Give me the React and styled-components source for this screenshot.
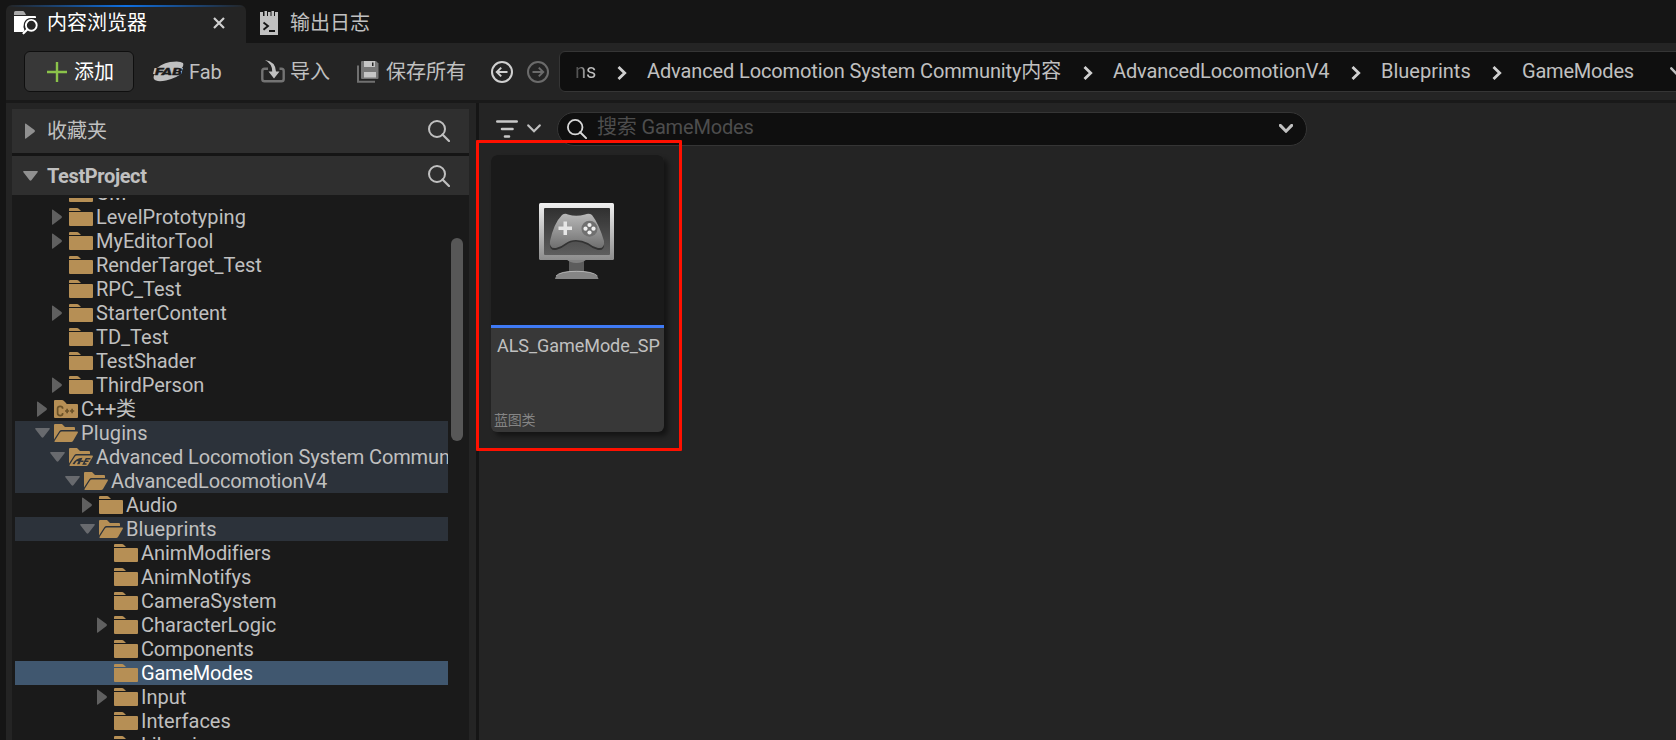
import React from "react";
import styled, { createGlobalStyle, css } from "styled-components";

const GlobalStyle = createGlobalStyle`
  * { box-sizing: border-box; }
  body { margin: 0; background: #151515; overflow: hidden; }
  svg { display: block; flex: none; }
`;

const Window = styled.div`
  width: 1676px;
  height: 740px;
  padding-left: 6px;
  display: flex;
  flex-direction: column;
  overflow: hidden;
  background: #151515;
  color: #c0c0c0;
  font: 20px/24px Roboto, "Noto Sans CJK SC", sans-serif;
  white-space: nowrap;
`;

const TabBar = styled.div`
  display: flex;
  flex: none;
  height: 43px;
  padding-top: 5px;
`;

const Tab = styled.div`
  display: flex;
  align-items: center;
  width: ${(p) => p.$width}px;
  padding: 0 21px 3px ${(p) => p.$inset}px;
  border-radius: 6px 6px 0 0;
  overflow: hidden;
  ${(p) =>
    p.$active &&
    css`
      color: #fff;
      background: linear-gradient(90deg, #242424, #0f6fe0 50%, #242424) top / 100% 2px no-repeat, #242424;
    `}
`;

const TabLabel = styled.span`
  margin-left: ${(p) => p.$gap}px;
  flex: 1;
`;

const Toolbar = styled.div`
  display: flex;
  align-items: center;
  flex: none;
  height: 60px;
  padding-left: 18px;
  background: #242424;
  border-bottom: 3px solid #191919;
`;

const AddButton = styled.div`
  display: flex;
  align-items: center;
  flex: none;
  gap: 7px;
  width: 110px;
  height: 41px;
  padding-left: 22px;
  color: #fff;
  background: #383838;
  border: 1px solid #0f0f0f;
  border-radius: 6px;
`;

const ToolItem = styled.div`
  display: flex;
  align-items: center;
  flex: none;
  gap: ${(p) => p.$gap}px;
  width: ${(p) => p.$width}px;
  margin-left: ${(p) => p.$before}px;
`;

const Breadcrumb = styled.div`
  display: flex;
  align-items: center;
  flex: none;
  width: 1130px;
  height: 41px;
  margin-left: 10px;
  padding: 0 0 1px 15px;
  background: #0f0f0f;
  border: 1px solid #353535;
  border-radius: 6px;
`;

const Crumb = styled.span`
  flex: none;
  width: ${(p) => p.$width}px;
  letter-spacing: ${(p) => p.$track || 0}px;
  ${(p) =>
    p.$faded &&
    css`
      color: transparent;
      background: linear-gradient(90deg, #3a3a3a, #c0c0c0 60%);
      background-clip: text;
      -webkit-background-clip: text;
    `}
`;

const CrumbArrow = styled.div`
  padding: 3px 20px 0 21px;
`;

const Body = styled.div`
  display: flex;
  flex: 1;
  min-height: 0;
  background: #242424;
`;

const Sources = styled.div`
  display: flex;
  flex-direction: column;
  flex: none;
  width: 470px;
  padding: 6px 7px 0 6px;
`;

const SectionHeader = styled.div`
  display: flex;
  align-items: center;
  flex: none;
  height: ${(p) => p.$height}px;
  padding: 0 19px 0 ${(p) => p.$inset}px;
  background: #2f2f2f;
  ${(p) => p.$bold && "font-weight: 700; letter-spacing: -0.38px;"}
`;

const SectionRule = styled.div`
  flex: none;
  height: 3px;
  background: #151515;
`;

const SectionTitle = styled.span`
  flex: 1;
  margin-left: ${(p) => p.$gap}px;
`;

const TreeArea = styled.div`
  display: flex;
  flex: 1;
  min-height: 0;
  padding: 3px 6px 0 3px;
  background: #1a1a1a;
`;

const TreeView = styled.div`
  width: 433px;
  overflow: hidden;
`;

const TreeRows = styled.div`
  margin-top: -17px;
`;

const TreeRow = styled.div`
  display: flex;
  align-items: center;
  height: 24px;
  padding-left: ${(p) => 19 + p.$depth * 15}px;
  color: ${(p) => (p.$selected ? "#fff" : "#c0c0c0")};
  background: ${(p) => (p.$selected ? "#40576f" : p.$open ? "#2c323a" : "transparent")};
`;

const ArrowSlot = styled.div`
  width: 20px;
  flex: none;
  padding-left: ${(p) => (p.$closed ? 3 : 0.5)}px;
`;

const FolderLabel = styled.span`
  margin-left: 3px;
  letter-spacing: ${(p) => p.$track || 0}px;
`;

const ScrollThumb = styled.div`
  width: 12px;
  height: 203px;
  margin: 40px 0 0 3px;
  border-radius: 6px;
  background: #575757;
`;

const Assets = styled.div`
  flex: 1;
  border-left: 3px solid #151515;
`;

const FilterRow = styled.div`
  display: flex;
  align-items: center;
  height: 43px;
  margin-top: 4px;
  padding-left: 17px;
`;

const SearchBox = styled.div`
  display: flex;
  align-items: center;
  width: 750px;
  height: 34px;
  margin: 0 0 0 16px;
  padding: 0 13px 0 9px;
  background: #0f0f0f;
  border: 1px solid #353535;
  border-radius: 17px;
`;

const Placeholder = styled.span`
  flex: 1;
  margin: -4px 0 0 10px;
  color: #4d4d4d;
  letter-spacing: -0.17px;
`;

const AssetCard = styled.div`
  display: flex;
  flex-direction: column;
  width: 173px;
  height: 277px;
  margin: 5px 0 0 12px;
  border-radius: 6px;
  overflow: hidden;
  background: #383838;
  box-shadow: 4px 4px 5px rgba(0, 0, 0, 0.45);
`;

const Thumbnail = styled.div`
  display: flex;
  justify-content: center;
  height: 173px;
  padding: 48px 3px 0 0;
  background: #1a1a1a;
  border-bottom: 3px solid #3f7af5;
`;

const AssetName = styled.div`
  flex: 1;
  padding: 6px 0 0 6px;
  font-size: 18px;
  letter-spacing: -0.05px;
`;

const AssetType = styled.div`
  height: 24px;
  padding-left: 3px;
  color: #858585;
  font-size: 14px;
  letter-spacing: -0.2px;
`;

const Highlight = styled.div`
  position: absolute;
  left: 476px;
  top: 140px;
  width: 206px;
  height: 311px;
  border: 3px solid #ff1000;
  border-radius: 1px;
`;

const FOLDER = "#b68f55";

function SearchIcon({ size = 22, color = "#c0c0c0" }) {
  return (
    <svg width={size} height={size} viewBox="0 0 22 22" fill="none" stroke={color} strokeWidth="2">
      <circle cx="9" cy="9" r="8" />
      <path d="M14.5 14.5 21 21" strokeWidth="2.2" strokeLinecap="round" />
    </svg>
  );
}

function RightArrow({ color = "#606060" }) {
  return (
    <svg width="10" height="16" viewBox="0 0 10 16">
      <path d="M0 1Q0 0 1 .8L9.5 7Q10.3 8 9.5 9L1 15.4Q0 16 0 15Z" fill={color} />
    </svg>
  );
}

function DownArrow({ color = "#686a6e" }) {
  return (
    <svg width="15" height="10" viewBox="0 0 15 10">
      <path d="M.8 0H14.2Q15.3 .3 14.6 1.2L8.4 9.3Q7.5 10 6.6 9.3L.4 1.2Q-.3.3 .8 0Z" fill={color} />
    </svg>
  );
}

function ChevronDown({ stroke = 2.5 }) {
  return (
    <svg width="14" height="9" viewBox="0 0 14 9" fill="none" stroke="#c0c0c0" strokeWidth={stroke} strokeLinecap="round">
      <path d="M1.3 1.4 7 7.2 12.7 1.4" />
    </svg>
  );
}

function FolderIcon({ kind }) {
  if (kind === "open" || kind === "plugin") {
    return (
      <svg width="24" height="18" viewBox="0 0 24 18" fill={FOLDER}>
        <path d="M0 1Q0 0 1 0H8L11 3H20Q21 3 21 4V6H7.5Q6.2 6 5.5 7L0 15.5Z" />
        <path d="M7.8 7.6H23.3Q24.2 7.8 23.8 8.7L19 17Q18.4 18 17.2 18H1Q0 17.8 .7 16.8L5.8 8.8Q6.6 7.6 7.8 7.6Z" />
        {kind === "plugin" && (
          <>
            <path d="M3.5 16Q6.5 10.3 13.5 9.800L10.500 16.300H8L9.500 13.300H7.500L5.500 16.300Z" fill="#2c323a" />
            <path d="M11.500 13.300H14.500M21.500 10.700H17.300L14.500 16H17.500M16 13.300H19.500" fill="none" stroke="#2c323a" strokeWidth="1.600" />
          </>
        )}
      </svg>
    );
  }
  return (
    <svg width="24" height="18" viewBox="0 0 24 18" fill={FOLDER}>
      <path d="M0 1Q0 0 1 0H8Q9 0 10 1L12 3H0Z" />
      <path d="M0 4H23Q24 4 24 5V17Q24 18 23 18H1Q0 18 0 17Z" />
      {kind === "cpp" && (
        <>
          <path d="M0 3H12L13 4.5H0Z" />
          <path
            d="M8.6 8.7V8.2Q8.6 6.3 6.2 6.3 3.6 6.3 3.6 8.6V13.3Q3.6 15.6 6.2 15.6 8.6 15.6 8.6 13.7V13.1M11 11H15.2M13.1 8.8V13.2M16 11H20.2M18.1 8.8V13.2"
            fill="none"
            stroke="#6b5228"
            strokeWidth="1.7"
          />
        </>
      )}
    </svg>
  );
}

function BrowserIcon() {
  return (
    <svg width="25" height="24" viewBox="0 0 25 24">
      <path d="M0 1.5Q0 0 1.5 0H9Q10 0 11 2L12 4H0Z" fill="#a8a8a8" />
      <path d="M0 5H21Q22 5 22 6V21H0Z" fill="#fff" />
      <path d="M7 24 10.5 19.5Q8.7 16 10 12Q12 7 17 7H25V24Z" fill="#242424" />
      <circle cx="17.3" cy="14.3" r="5.4" fill="none" stroke="#fff" strokeWidth="1.9" />
      <path d="M13.3 18.4 9.5 22.3" stroke="#fff" strokeWidth="2.2" strokeLinecap="round" />
    </svg>
  );
}

function LogIcon() {
  return (
    <svg width="18" height="24" viewBox="0 0 18 24">
      <path d="M0 1H3V5H4.5V0H7V5H8V1H10.5V5H11.5V0H14V5H15V1H18V24H0Z" fill="#c0c0c0" />
      <path d="M3.5 11.5 8 15 3.5 18.8M9 20H15" fill="none" stroke="#151515" strokeWidth="1.9" />
    </svg>
  );
}

function FabIcon() {
  return (
    <svg width="31" height="21" viewBox="0 0 31 21">
      <path d="M1 10Q7 3 17 1Q27-.6 30 2Q31 4 29 7L29 12Q24 17 13 19.5Q3 21.3 1 18Q-.2 15.5 2 13Z" fill="#c0c0c0" />
      <path d="M1.5 7H30L28 13H0Z" fill="#c0c0c0" />
      <text
        x="2"
        y="13.6"
        fontFamily="Roboto"
        fontSize="9.5"
        fontWeight="900"
        fontStyle="italic"
        textLength="27"
        lengthAdjust="spacingAndGlyphs"
        fill="#1b1b1b"
        stroke="#1b1b1b"
        strokeWidth=".3"
      >
        FAB
      </text>
    </svg>
  );
}

function ImportIcon() {
  return (
    <svg width="24" height="23" viewBox="0 0 24 23">
      <path d="M7 8.7H3.5Q1.3 8.7 1.3 11V19Q1.3 21.3 3.5 21.3H20.5Q22.7 21.3 22.7 19V11Q22.7 8.7 20.5 8.7H18.5" fill="none" stroke="#737373" strokeWidth="2.4" />
      <path d="M4 0Q14.5 1.5 15 11.5H18.5L13 18.5 7.5 11.5H11.2Q11.5 4 4 0Z" fill="#c0c0c0" />
    </svg>
  );
}

function SaveIcon() {
  return (
    <svg width="22" height="22" viewBox="0 0 22 22">
      <path d="M1 4.5V20.8H18" fill="none" stroke="#707070" strokeWidth="2" />
      <path d="M5 0H19L21.5 2.5V17Q21.5 18 20.5 18H5Q4 18 4 17V1Q4 0 5 0Z" fill="#777" />
      <path d="M7 0H18V6H7ZM7 11H19V16.5H7Z" fill="#c6c6c6" />
      <path d="M15 1.5H16.5V5H15Z" fill="#242424" />
    </svg>
  );
}

function HistoryIcon({ forward }) {
  return (
    <svg width="22" height="22" viewBox="0 0 22 22" fill="none" stroke={forward ? "#6b6b6b" : "#d0d0d0"} strokeWidth="2">
      <circle cx="11" cy="11" r="10" />
      <path d={forward ? "M5.5 11H16M11.8 6.6 16.2 11 11.8 15.4" : "M16.5 11H6M10.2 6.6 5.8 11 10.2 15.4"} />
    </svg>
  );
}

function GameModeIcon() {
  return (
    <svg width="75" height="77" viewBox="0 0 75 77">
      <defs>
        <linearGradient id="frame" x2="0" y2="1">
          <stop stopColor="#f0f0f0" />
          <stop offset="1" stopColor="#8c8c8c" />
        </linearGradient>
        <linearGradient id="screen" x2="0" y2="1">
          <stop stopColor="#303030" />
          <stop offset="1" stopColor="#5e5e5e" />
        </linearGradient>
        <linearGradient id="pad" x2="0" y2="1">
          <stop stopColor="#b8b8b8" />
          <stop offset="1" stopColor="#6f6f6f" />
        </linearGradient>
      </defs>
      <rect x="30" y="57" width="15" height="13" fill="#5c5c5c" />
      <path d="M27 56H48Q44 60 37.5 60 31 60 27 56Z" fill="#808080" />
      <path d="M16 76Q17 68 37.5 68 58 68 59.5 76Z" fill="#858585" />
      <path d="M17 73Q21 68.3 37.5 68.3 54 68.3 58.5 73" fill="none" stroke="#c4c4c4" strokeWidth=".8" />
      <rect width="75" height="57" rx="1.5" fill="url(#frame)" />
      <rect x="5" y="5" width="66" height="47" rx="1" fill="url(#screen)" />
      <path
        d="M23 14Q26 11.5 29 13 37 15 46 13 50 11.5 53 14 60 23 65 40 66 48 59 47 54 46 49 42 43 38.5 37 38.5 31 38.5 27 42 22 46 17 47 10 48 11 40 15 22 23 14Z"
        fill="#333"
      />
      <path
        d="M23 12Q26 10 29 11.5 37 14 46 11.5 50 10 53 12 60 21 65 38 66 46 59 45 54 44 49 40 43 37 37 37 31 37 27 40 22 44 17 45 10 46 11 38 15 20 23 12Z"
        fill="url(#pad)"
      />
      <path d="M24.500 18.500H28V23.500H33V27H28V32H24.500V27H19.500V23.500H24.500Z" fill="#e6e6e6" />
      <circle cx="50.5" cy="25.700" r="8" fill="#707070" />
      <g fill="#f0f0f0">
        <circle cx="50.5" cy="22" r="2.1" />
        <circle cx="50.5" cy="29.5" r="2.1" />
        <circle cx="46.5" cy="25.7" r="2.1" />
        <circle cx="54.5" cy="25.7" r="2.1" />
      </g>
    </svg>
  );
}

const CRUMBS = [
  { name: "ns", width: 21, faded: true },
  { name: "Advanced Locomotion System Community内容", width: 415, track: -0.12 },
  { name: "AdvancedLocomotionV4", width: 217, track: -0.13 },
  { name: "Blueprints", width: 90 },
  { name: "GameModes", width: 112, track: -0.2 },
];

const TREE = [
  { name: "CM", depth: 1 },
  { name: "LevelPrototyping", depth: 1, arrow: true, track: 0.06 },
  { name: "MyEditorTool", depth: 1, arrow: true },
  { name: "RenderTarget_Test", depth: 1, track: -0.06 },
  { name: "RPC_Test", depth: 1 },
  { name: "StarterContent", depth: 1, arrow: true },
  { name: "TD_Test", depth: 1 },
  { name: "TestShader", depth: 1, track: -0.1 },
  { name: "ThirdPerson", depth: 1, arrow: true },
  { name: "C++类", depth: 0, arrow: true, kind: "cpp", track: -0.2 },
  { name: "Plugins", depth: 0, kind: "open", track: 0.1 },
  { name: "Advanced Locomotion System Community内容", depth: 1, kind: "plugin", track: -0.12 },
  { name: "AdvancedLocomotionV4", depth: 2, kind: "open", track: -0.14 },
  { name: "Audio", depth: 3, arrow: true },
  { name: "Blueprints", depth: 3, kind: "open", track: 0.08 },
  { name: "AnimModifiers", depth: 4, track: -0.08 },
  { name: "AnimNotifys", depth: 4 },
  { name: "CameraSystem", depth: 4 },
  { name: "CharacterLogic", depth: 4, arrow: true },
  { name: "Components", depth: 4, track: -0.15 },
  { name: "GameModes", depth: 4, selected: true, track: -0.2 },
  { name: "Input", depth: 4, arrow: true },
  { name: "Interfaces", depth: 4 },
  { name: "Libraries", depth: 4 },
];

function FolderRow({ name, depth, arrow, kind, selected, track }) {
  const open = kind === "open" || kind === "plugin";
  return (
    <TreeRow $depth={depth} $open={open} $selected={selected}>
      <ArrowSlot $closed={arrow}>
        {open && <DownArrow />}
        {arrow && <RightArrow />}
      </ArrowSlot>
      <FolderIcon kind={kind} />
      <FolderLabel $track={track}>{name}</FolderLabel>
    </TreeRow>
  );
}

export default function App() {
  return (
    <Window>
      <GlobalStyle />
      <TabBar>
        <Tab $active $width={240} $inset={8}>
          <BrowserIcon />
          <TabLabel $gap={8}>内容浏览器</TabLabel>
          <svg width="12" height="12" viewBox="0 0 12 12" stroke="#d0d0d0" strokeWidth="2.2">
            <path d="M1 1 11 11M11 1 1 11" />
          </svg>
        </Tab>
        <Tab $width={180} $inset={14}>
          <LogIcon />
          <TabLabel $gap={12}>输出日志</TabLabel>
        </Tab>
      </TabBar>
      <Toolbar>
        <AddButton>
          <svg width="20" height="20" viewBox="0 0 20 20" stroke="#8bc34a" strokeWidth="2.4">
            <path d="M10 0V20M0 10H20" />
          </svg>
          添加
        </AddButton>
        <ToolItem $before={19} $gap={5} $width={90}>
          <FabIcon />
          Fab
        </ToolItem>
        <ToolItem $before={18} $gap={5} $width={90}>
          <ImportIcon />
          导入
        </ToolItem>
        <ToolItem $before={6} $gap={7} $width={130}>
          <SaveIcon />
          保存所有
        </ToolItem>
        <ToolItem $before={4} $gap={14} $width={58}>
          <HistoryIcon />
          <HistoryIcon forward />
        </ToolItem>
        <Breadcrumb>
          {CRUMBS.map((c, i) => (
            <React.Fragment key={c.name}>
              {i > 0 && (
                <CrumbArrow>
                  <svg width="10" height="14" viewBox="0 0 10 14" fill="none" stroke="#d0d0d0" strokeWidth="2.8">
                    <path d="M1.5 1 7.7 7 1.5 13" />
                  </svg>
                </CrumbArrow>
              )}
              <Crumb $width={c.width} $faded={c.faded} $track={c.track}>
                {c.name}
              </Crumb>
            </React.Fragment>
          ))}
          <ToolItem $before={36} $width={14}>
            <ChevronDown />
          </ToolItem>
        </Breadcrumb>
      </Toolbar>
      <Body>
        <Sources>
          <SectionHeader $height={44} $inset={13}>
            <RightArrow color="#909090" />
            <SectionTitle $gap={12}>收藏夹</SectionTitle>
            <SearchIcon />
          </SectionHeader>
          <SectionRule />
          <SectionHeader $height={39} $inset={11} $bold>
            <DownArrow color="#909090" />
            <SectionTitle $gap={9}>TestProject</SectionTitle>
            <SearchIcon />
          </SectionHeader>
          <TreeArea>
            <TreeView>
              <TreeRows>
                {TREE.map((row, i) => (
                  <FolderRow key={i} {...row} />
                ))}
              </TreeRows>
            </TreeView>
            <ScrollThumb />
          </TreeArea>
        </Sources>
        <Assets>
          <FilterRow>
            <svg width="22" height="18" viewBox="0 0 22 18" stroke="#c8c8c8" strokeWidth="2.6" strokeLinecap="round">
              <path d="M1.3 1.5H20.7M6 9H16.5M9 16.5H13" />
            </svg>
            <ToolItem $before={9} $width={14}>
              <ChevronDown stroke={2.2} />
            </ToolItem>
            <SearchBox>
              <SearchIcon size={20} color="#d8d8d8" />
              <Placeholder>搜索 GameModes</Placeholder>
              <ChevronDown stroke={3} />
            </SearchBox>
          </FilterRow>
          <AssetCard>
            <Thumbnail>
              <GameModeIcon />
            </Thumbnail>
            <AssetName>ALS_GameMode_SP</AssetName>
            <AssetType>蓝图类</AssetType>
          </AssetCard>
        </Assets>
      </Body>
      <Highlight />
    </Window>
  );
}
